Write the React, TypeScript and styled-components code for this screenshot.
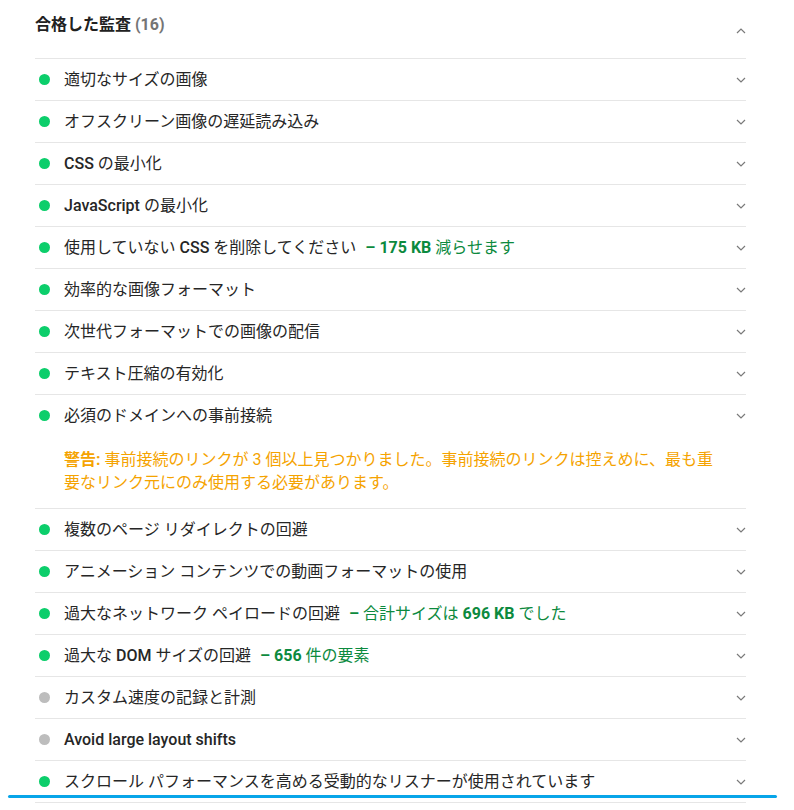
import React from "react";
import styled, { createGlobalStyle } from "styled-components";

const Global = createGlobalStyle`
  html, body { margin: 0; padding: 0; background: #fff; }
  body {
    font-family: Roboto, "Noto Sans CJK JP", "Noto Sans", sans-serif;
    color: #212121;
    -webkit-font-smoothing: antialiased;
  }
`;

const Page = styled.div`
  position: relative;
  width: 794px;
  height: 810px;
  overflow: hidden;
  padding: 0 48px 0 35px;
  box-sizing: border-box;
`;

const Header = styled.div`
  display: flex;
  align-items: flex-start;
  justify-content: space-between;
  height: 58px;
  box-sizing: border-box;
  padding-top: 14px;
`;

const HeaderTitle = styled.div`
  font-size: 16px;
  line-height: 22px;
  font-weight: 700;
  color: #212121;
`;

const Count = styled.span`
  color: #757575;
  font-weight: 700;
`;

const ChevronBox = styled.span<{ $up?: boolean }>`
  display: flex;
  align-items: center;
  justify-content: center;
  width: 10px;
  height: 6px;
  margin-top: ${(p) => (p.$up ? "14px" : "0")};
`;

const List = styled.div`
  display: flex;
  flex-direction: column;
  border-bottom: 1px solid #e6e6e6;
`;

const Audit = styled.div`
  border-top: 1px solid #e6e6e6;
`;

const Summary = styled.div`
  display: flex;
  align-items: center;
  height: 41px;
`;

const Dot = styled.span<{ $color: string }>`
  flex: none;
  width: 11px;
  height: 11px;
  border-radius: 50%;
  background: ${(p) => p.$color};
  margin: 0 14px 0 4px;
`;

const Title = styled.span`
  flex: 1;
  font-size: 16px;
  font-weight: 400;
  line-height: 20px;
  color: #262626;
  white-space: nowrap;
`;

const Latin = styled.span<{ $w: number }>`
  font-weight: ${(p) => p.$w};
`;

const Display = styled.span`
  color: #0c8a3e;
  margin-left: 9px;
`;

const Warning = styled.div`
  padding: 12px 24px 14px 29px;
  font-size: 16px;
  line-height: 23px;
  color: #f5a300;
`;

const WarnLabel = styled.b`
  font-weight: 700;
`;

const ScrollBar = styled.div`
  position: absolute;
  left: 8px;
  top: 795px;
  width: 769px;
  height: 3px;
  border-radius: 2px;
  background: #07a5e9;
`;

const Mixed = ({ text, weight }: { text: string; weight: number }) => {
  const parts = text.match(/[\x00-\x7F–]+|[^\x00-\x7F–]+/g) || [];
  return (
    <>
      {parts.map((p, i) =>
        /^[\x00-\x7F–]+$/.test(p) && /[A-Za-z0-9–]/.test(p) ? (
          <Latin key={i} $w={weight}>
            {p}
          </Latin>
        ) : (
          <React.Fragment key={i}>{p}</React.Fragment>
        )
      )}
    </>
  );
};

const Chevron = ({ up }: { up?: boolean }) => (
  <ChevronBox $up={up}>
    <svg width="10" height="6" viewBox="0 0 10 6">
      <polyline
        points={up ? "1,5 5,1 9,5" : "1,1 5,5 9,1"}
        fill="none"
        stroke="#7a7a7a"
        strokeWidth="1.2"
      />
    </svg>
  </ChevronBox>
);

type Item = {
  title: string;
  display?: string;
  gray?: boolean;
  warning?: boolean;
};

const items: Item[] = [
  { title: "適切なサイズの画像" },
  { title: "オフスクリーン画像の遅延読み込み" },
  { title: "CSS の最小化" },
  { title: "JavaScript の最小化" },
  { title: "使用していない CSS を削除してください", display: "– 175 KB 減らせます" },
  { title: "効率的な画像フォーマット" },
  { title: "次世代フォーマットでの画像の配信" },
  { title: "テキスト圧縮の有効化" },
  { title: "必須のドメインへの事前接続", warning: true },
  { title: "複数のページ リダイレクトの回避" },
  { title: "アニメーション コンテンツでの動画フォーマットの使用" },
  { title: "過大なネットワーク ペイロードの回避", display: "– 合計サイズは 696 KB でした" },
  { title: "過大な DOM サイズの回避", display: "– 656 件の要素" },
  { title: "カスタム速度の記録と計測", gray: true },
  { title: "Avoid large layout shifts", gray: true },
  { title: "スクロール パフォーマンスを高める受動的なリスナーが使用されています" },
];

export default function App() {
  return (
    <>
      <Global />
      <Page>
        <Header>
          <HeaderTitle>
            合格した監査 <Count>(16)</Count>
          </HeaderTitle>
          <Chevron up />
        </Header>
        <List>
          {items.map((it, i) => (
            <Audit key={i}>
              <Summary>
                <Dot $color={it.gray ? "#bdbdbd" : "#0cce6b"} />
                <Title>
                  <Mixed text={it.title} weight={500} />
                  {it.display && (
                    <Display>
                      <Mixed text={it.display} weight={700} />
                    </Display>
                  )}
                </Title>
                <Chevron />
              </Summary>
              {it.warning && (
                <Warning>
                  <WarnLabel>警告:</WarnLabel> 事前接続のリンクが 3
                  個以上見つかりました。事前接続のリンクは控えめに、最も重要なリンク元にのみ使用する必要があります。
                </Warning>
              )}
            </Audit>
          ))}
        </List>
        <ScrollBar />
      </Page>
    </>
  );
}
